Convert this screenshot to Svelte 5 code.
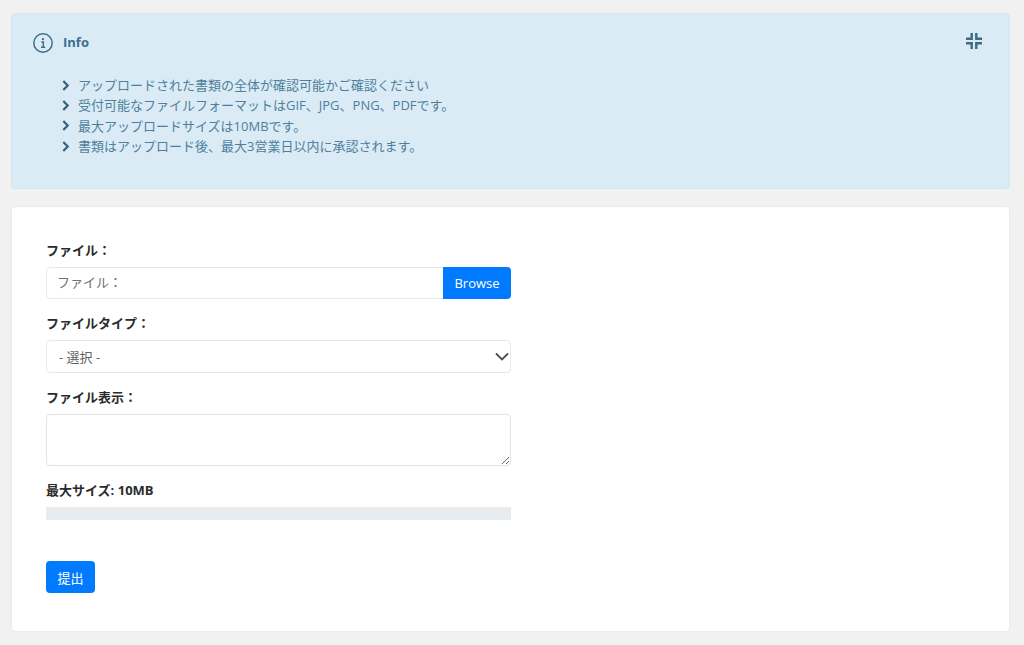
<script>
  const items = [
    'アップロードされた書類の全体が確認可能かご確認ください',
    '受付可能なファイルフォーマットはGIF、JPG、PNG、PDFです。',
    '最大アップロードサイズは10MBです。',
    '書類はアップロード後、最大3営業日以内に承認されます。'
  ];
</script>

<main class="page">
  <section class="alert">
    <div class="alert-head">
      <svg class="info" width="22" height="22" viewBox="0 0 22 22" fill="none" stroke="currentColor">
        <circle cx="11" cy="11" r="9.2" stroke-width="1.5" />
        <circle cx="11" cy="7.2" r="1.1" fill="currentColor" stroke="none" />
        <path d="M9.3 10h2v5M9 15.2h4.2" stroke-width="1.5" />
      </svg>
      <strong>Info</strong>
      <svg class="compress" width="18" height="18" viewBox="0 0 18 18" fill="currentColor">
        <path d="M5.5 1h2.4v6.9H1V5.5h4.5zM10.1 1h2.4v4.5H17v2.4h-6.9zM1 10.1h6.9V17H5.5v-4.5H1zM10.1 10.1H17v2.4h-4.5V17h-2.4z" />
      </svg>
    </div>
    <ul>
      {#each items as item}
        <li>
          <svg width="8" height="11" viewBox="0 0 8 11" fill="none" stroke="currentColor" stroke-width="2.2"><path d="M1.3 1l4.4 4.5-4.4 4.5" /></svg>
          <span>{item}</span>
        </li>
      {/each}
    </ul>
  </section>

  <section class="card">
    <form class="form">
      <label for="file">ファイル：</label>
      <div class="file">
        <span class="file-name">ファイル：</span>
        <span class="browse">Browse</span>
      </div>

      <label for="type">ファイルタイプ：</label>
      <div class="select-wrap">
        <select id="type"><option>- 選択 -</option></select>
        <svg width="14" height="10" viewBox="0 0 14 10" fill="none" stroke="#4b4f54" stroke-width="1.8" stroke-linecap="round"><path d="M1.5 2l5.5 5.5L12.5 2" /></svg>
      </div>

      <label for="desc">ファイル表示：</label>
      <textarea id="desc"></textarea>

      <div class="max">最大サイズ: 10MB</div>
      <div class="progress"></div>

      <button type="button">提出</button>
    </form>
  </section>
</main>

<style>
  :global(body) {
    margin: 0;
    background: #f1f1f1;
    font-family: "Open Sans", "Noto Sans CJK JP", sans-serif;
    font-size: 13px;
  }
  .page {
    display: flex;
    flex-direction: column;
    gap: 17px;
    padding: 13px 14px 13px 11px;
    height: 645px;
    box-sizing: border-box;
  }
  .alert {
    height: 176px;
    box-sizing: border-box;
    background: #daebf6;
    border: 1px solid #d3e5f0;
    border-radius: 4px;
    color: #4f7f9b;
    padding: 18px 18px 0 20px;
  }
  .alert-head {
    display: flex;
    align-items: flex-start;
    height: 34px;
    color: #39708f;
  }
  .info { margin-right: 9px; }
  .alert-head strong {
    font-size: 13px;
    font-weight: 700;
    line-height: 20px;
  }
  .compress { margin-left: auto; margin-right: 8px; color: #3f6b85; }
  ul {
    list-style: none;
    margin: 9px 0 0;
    padding: 0 0 0 30px;
  }
  li {
    display: flex;
    align-items: center;
    gap: 8px;
    height: 20.3px;
    font-size: 13px;
    line-height: 20px;
  }
  li svg { color: #33617d; flex: none; }
  .card {
    height: 426px;
    box-sizing: border-box;
    background: #fff;
    border: 1px solid #ebebeb;
    border-radius: 4px;
    padding: 33px 34px;
  }
  .form {
    width: 465px;
    display: flex;
    flex-direction: column;
  }
  label, .max {
    font-size: 13px;
    font-weight: 700;
    color: #2b2b2b;
    line-height: 20px;
    margin-bottom: 7px;
  }
  .file {
    display: flex;
    height: 32px;
    margin-bottom: 14px;
    box-sizing: border-box;
    border: 1px solid #e6e8ea;
    border-radius: 4px;
  }
  .file-name {
    flex: 1;
    color: #6b7075;
    padding: 0 10px;
    line-height: 29px;
  }
  .browse {
    width: 68px;
    margin: -1px;
    height: 32px;
    background: #007bff;
    color: #fff;
    text-align: center;
    line-height: 32px;
    border-radius: 0 4px 4px 0;
  }
  .select-wrap {
    position: relative;
    height: 33px;
    margin-bottom: 14px;
  }
  select {
    appearance: none;
    width: 100%;
    height: 100%;
    box-sizing: border-box;
    border: 1px solid #e6e8ea;
    border-radius: 4px;
    background: #fff;
    color: #5f6368;
    font: inherit;
    padding: 0 12px;
  }
  .select-wrap svg {
    position: absolute;
    right: 2px;
    top: 12px;
  }
  textarea {
    display: block;
    height: 52px;
    box-sizing: border-box;
    border: 1px solid #e0e2e4;
    border-radius: 4px;
    margin: 0 0 14px;
    resize: vertical;
  }
  .max { margin-bottom: 7px; }
  .progress {
    height: 13px;
    background: #e9ecef;
  }
  button {
    align-self: flex-start;
    width: 49px;
    height: 32px;
    margin-top: 41px;
    background: #007bff;
    color: #fff;
    border: none;
    border-radius: 4px;
    font: inherit;
    padding: 0;
  }
</style>
